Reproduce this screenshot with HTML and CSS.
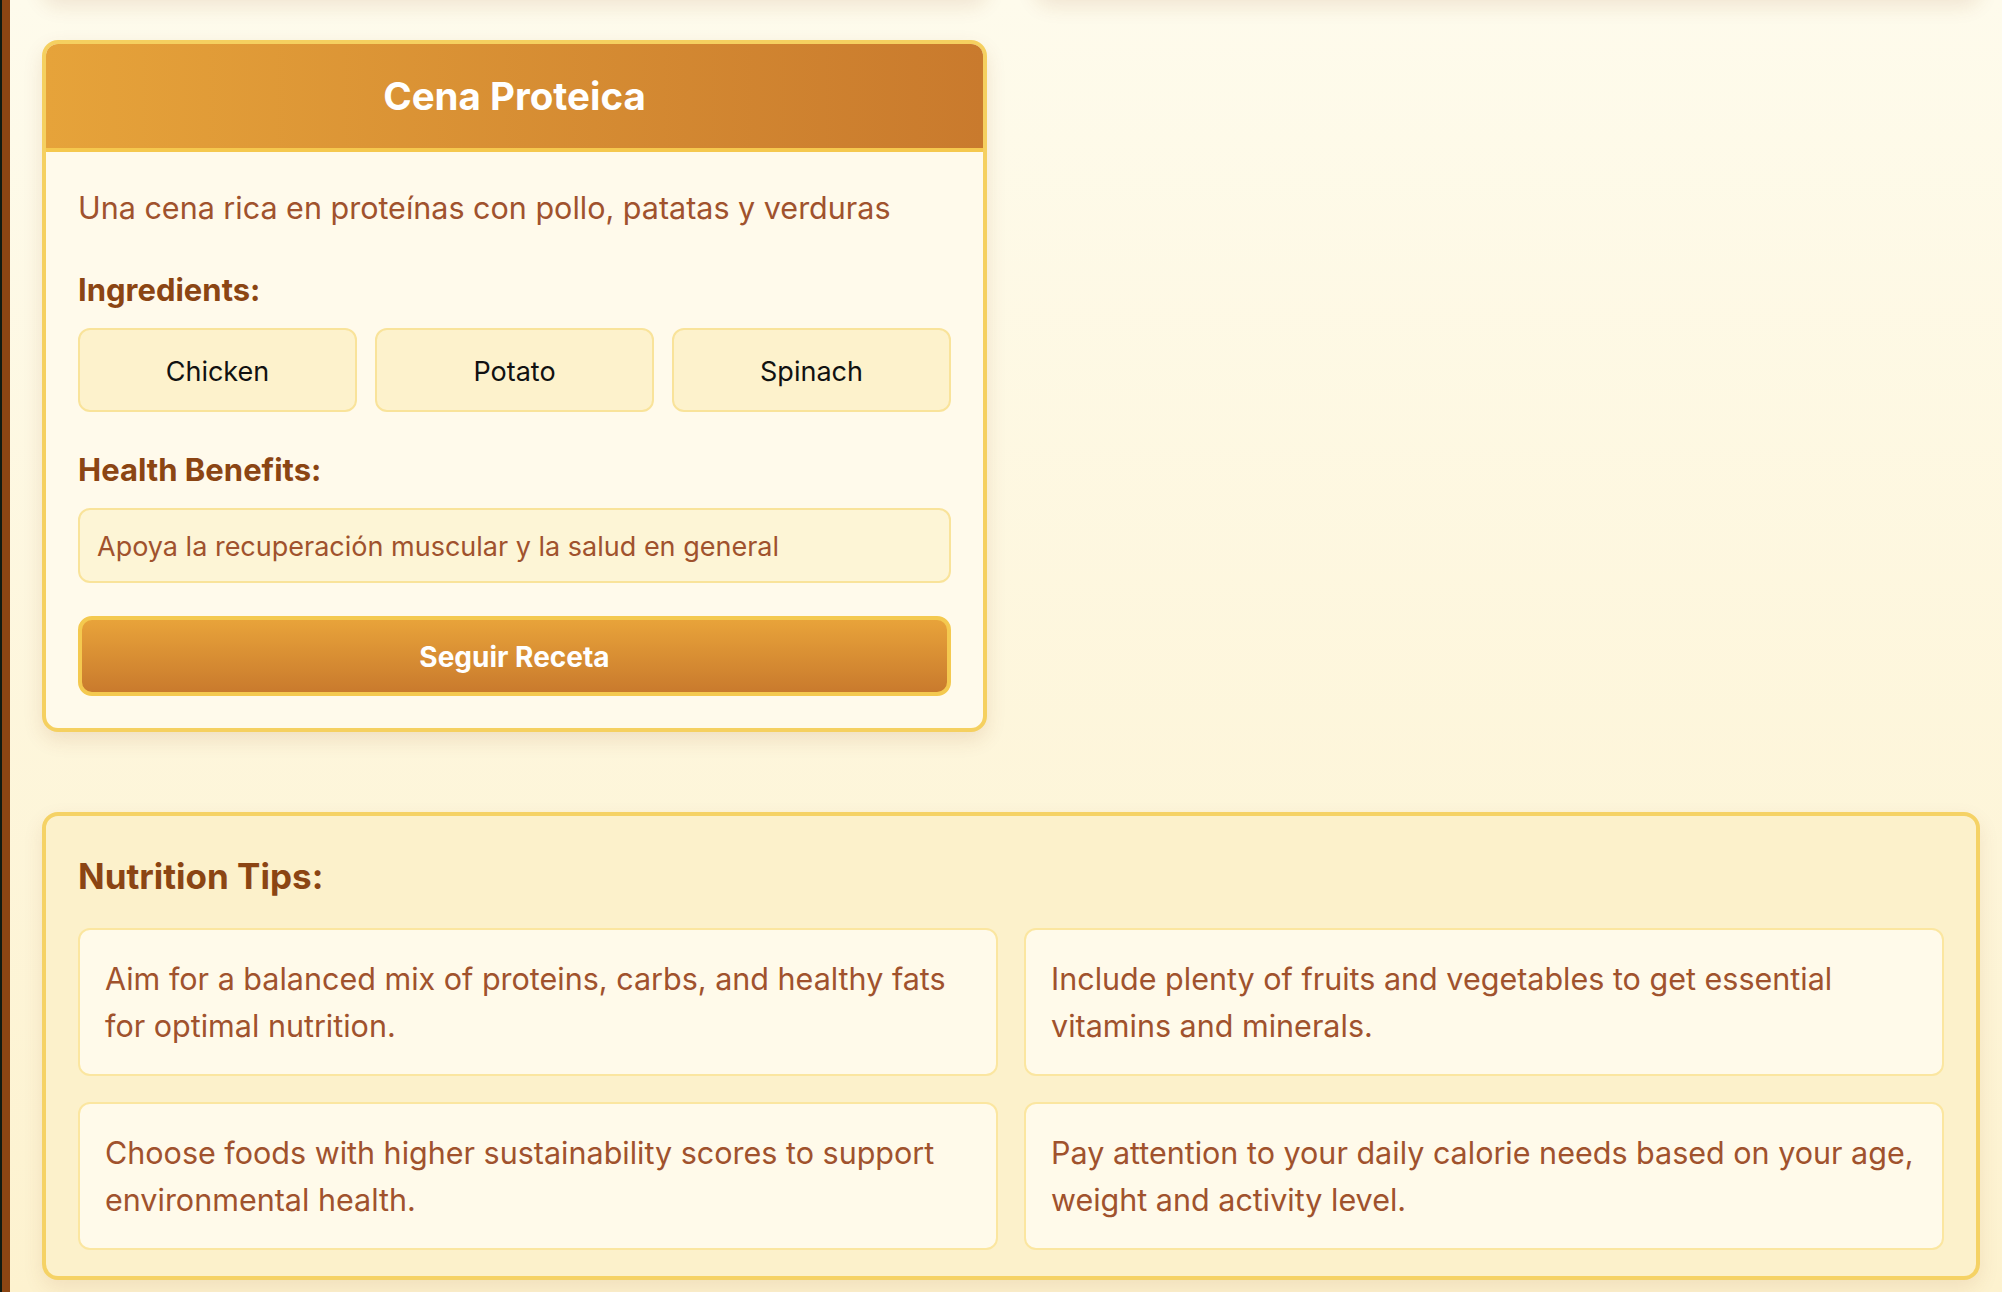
FILE: index.html
```html
<!DOCTYPE html>
<html lang="es">
<head>
<meta charset="utf-8">
<title>Recetas saludables</title>
<link rel="stylesheet" href="styles.css">
</head>
<body>
<main class="page">
  <section class="recipes">
    <article class="card card-stub" aria-hidden="true"></article>
    <article class="card card-stub" aria-hidden="true"></article>
    <article class="card">
      <header class="card-header">
        <h2 class="card-title">Cena Proteica</h2>
      </header>
      <div class="card-body">
        <p class="card-desc">Una cena rica en proteínas con pollo, patatas y verduras</p>
        <h3 class="card-label">Ingredients:</h3>
        <ul class="chips">
          <li class="chip">Chicken</li>
          <li class="chip">Potato</li>
          <li class="chip">Spinach</li>
        </ul>
        <h3 class="card-label">Health Benefits:</h3>
        <p class="benefit">Apoya la recuperación muscular y la salud en general</p>
        <button class="btn" type="button">Seguir Receta</button>
      </div>
    </article>
  </section>
  <section class="tips">
    <h2 class="tips-title">Nutrition Tips:</h2>
    <div class="tips-grid">
      <p class="tip">Aim for a balanced mix of proteins, carbs, and healthy fats for optimal nutrition.</p>
      <p class="tip">Include plenty of fruits and vegetables to get essential vitamins and minerals.</p>
      <p class="tip">Choose foods with higher sustainability scores to support environmental health.</p>
      <p class="tip">Pay attention to your daily calorie needs based on your age, weight and activity level.</p>
    </div>
  </section>
</main>
</body>
</html>
```

FILE: styles.css
```css
*, *::before, *::after {
  box-sizing: border-box;
}
html {
  background: #0f1a12;
}
body {
  margin: 0 0 0 2px;
  min-height: 1292px;
  border-left: 8px solid #8b4513;
  background: linear-gradient(180deg, #fefbec 0%, #fdf2cf 100%);
  font-family: Inter, "Noto Sans", sans-serif;
  overflow: hidden;
}
.page {
  display: flow-root;
  padding: 0 22px 0 32px;
}
.recipes {
  display: grid;
  grid-template-columns: 1fr 1fr;
  column-gap: 48px;
  row-gap: 42px;
  margin-top: -302px;
  align-items: start;
}
.card {
  background: #fffaeb;
  border: 4px solid #f5d060;
  border-radius: 16px;
  box-shadow: 0 8px 20px rgba(139, 69, 19, 0.12);
  overflow: hidden;
}
.card-stub {
  height: 300px;
}
.card-header {
  background: linear-gradient(90deg, #e6a33a, #c97a2d);
  border-bottom: 4px solid #f5c84e;
  padding: 30px 16px;
  text-align: center;
}
.card-title {
  margin: 0;
  color: #fff;
  font-size: 38.5px;
  line-height: 44px;
  font-weight: 700;
}
.card-body {
  padding: 34px 32px 32px;
}
.card-desc {
  margin: 0 0 42px;
  color: #a0522d;
  font-size: 30.5px;
  line-height: 44px;
}
.card-label {
  margin: 0 0 20px;
  color: #8b4513;
  font-size: 31px;
  line-height: 36px;
  font-weight: 700;
}
.chips {
  list-style: none;
  margin: 0 0 40px;
  padding: 0;
  display: grid;
  grid-template-columns: repeat(3, 1fr);
  gap: 18px;
}
.chip {
  background: #fdf2cc;
  border: 2px solid #f9e39a;
  border-radius: 12px;
  padding: 24px 8px 20px;
  text-align: center;
  font-size: 27px;
  line-height: 36px;
  color: #111;
}
.benefit {
  margin: 0 0 33px;
  background: #fdf5d6;
  border: 2px solid #f9e39a;
  border-radius: 12px;
  padding: 19px 17px 16px;
  font-size: 27px;
  line-height: 36px;
  color: #a0522d;
}
.btn {
  display: block;
  width: 100%;
  border: 4px solid #f4c94f;
  border-radius: 14px;
  background: linear-gradient(180deg, #e8a33a, #c97a2d);
  color: #fff;
  font-family: Inter, "Noto Sans", sans-serif;
  font-size: 28px;
  line-height: 36px;
  font-weight: 700;
  padding: 19px 18px 17px;
  cursor: pointer;
}
.tips {
  margin-top: 80px;
  background: #fcf1cb;
  border: 4px solid #f5d265;
  border-radius: 16px;
  padding: 40px 32px 26px;
  box-shadow: 0 8px 20px rgba(139, 69, 19, 0.1);
}
.tips-title {
  margin: 0 0 31px;
  color: #8b4513;
  font-size: 35px;
  line-height: 41px;
  font-weight: 700;
}
.tips-grid {
  display: grid;
  grid-template-columns: 1fr 1fr;
  gap: 26px;
}
.tip {
  margin: 0;
  background: #fffaea;
  border: 2px solid #fbe6a0;
  border-radius: 12px;
  padding: 25px 22px 25px 25px;
  font-size: 30.5px;
  line-height: 47px;
  color: #a0522d;
}
```
